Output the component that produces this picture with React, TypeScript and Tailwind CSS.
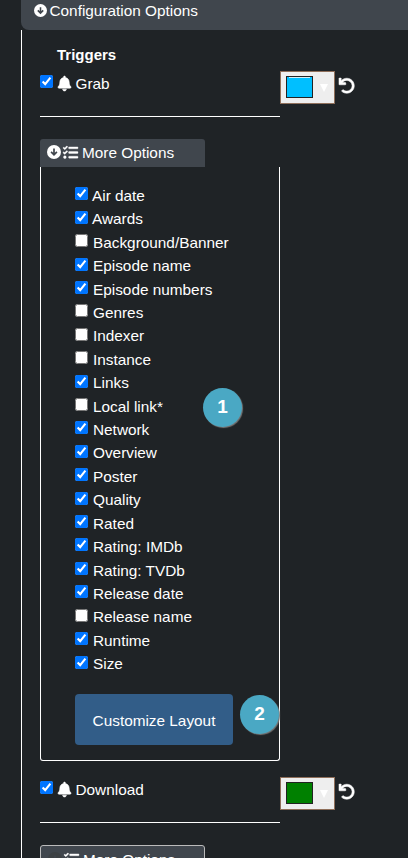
import { FaBell, FaTasks, FaUndo } from "react-icons/fa";

type Option = { label: string; on: boolean };

const options: Option[] = [
  { label: "Air date", on: true },
  { label: "Awards", on: true },
  { label: "Background/Banner", on: false },
  { label: "Episode name", on: true },
  { label: "Episode numbers", on: true },
  { label: "Genres", on: false },
  { label: "Indexer", on: false },
  { label: "Instance", on: false },
  { label: "Links", on: true },
  { label: "Local link*", on: false },
  { label: "Network", on: true },
  { label: "Overview", on: true },
  { label: "Poster", on: true },
  { label: "Quality", on: true },
  { label: "Rated", on: true },
  { label: "Rating: IMDb", on: true },
  { label: "Rating: TVDb", on: true },
  { label: "Release date", on: true },
  { label: "Release name", on: false },
  { label: "Runtime", on: true },
  { label: "Size", on: true },
];

function Check({ on }: { on: boolean }) {
  return <input type="checkbox" defaultChecked={on} className="m-0 block size-[13px] shrink-0" />;
}

function DownDisc({ className }: { className: string }) {
  return (
    <svg viewBox="0 0 14 14" className={"shrink-0 " + className}>
      <circle cx="7" cy="7" r="7" fill="currentColor" />
      <path d="M7 3.4v6M4.1 6.9 7 9.8l2.9-2.9" fill="none" stroke="#40464d" strokeWidth="1.7" />
    </svg>
  );
}

function ColorPicker({ color, glint }: { color: string; glint?: boolean }) {
  return (
    <div className="flex items-start">
      <div className="flex h-[33px] w-[55px] items-start border border-[#8f6f5a] bg-[#eeeeee] pt-1 pl-[5px]">
        <div className="h-[22px] w-[27px] border border-[#222222]" style={{ backgroundColor: color }}>
          {glint && <div className="mx-[2px] h-px bg-[#d5eef5]" />}
        </div>
        <svg viewBox="0 0 8 8" className="mt-2 ml-[7px] size-2 fill-white">
          <path d="M0 0h8L4 8z" />
        </svg>
      </div>
      <FaUndo className="mt-[7px] ml-1 size-[15.5px] overflow-visible stroke-white stroke-[18px]" />
    </div>
  );
}

function Trigger({ label, color, glint }: { label: string; color: string; glint?: boolean }) {
  return (
    <div className="flex h-[46px] items-start">
      <div className="flex h-[46px] w-60 items-start border-b border-white">
        <div className="mt-[4px]">
          <Check on />
        </div>
        <FaBell className="mt-[5px] ml-[4px] h-[15px] w-[15px] overflow-visible stroke-white stroke-[18px]" />
        <span className="mt-[4px] ml-[3.5px] leading-[17px]">{label}</span>
      </div>
      <ColorPicker color={color} glint={glint} />
    </div>
  );
}

function Badge({ n }: { n: number }) {
  return (
    <div className="flex size-[39px] items-center justify-center rounded-full bg-[#4aa8c4] text-[19px] font-bold shadow-[1px_1px_1px_#777777]">
      {n}
    </div>
  );
}

export default function App() {
  return (
    <div className="relative h-[858px] w-[408px] overflow-hidden bg-[#1f2326] pl-[21px] font-['Liberation_Sans',Arial,sans-serif] text-[15.35px] text-white">
      <header className="flex h-[30px] items-start rounded-bl-lg bg-[#40464d] pl-[13px]">
        <DownDisc className="mt-[4px] size-[13px]" />
        <span className="mt-[2px] ml-[2.5px] leading-[17px]">Configuration Options</span>
      </header>

      <main className="h-[828px] border-l border-white pl-[18px]">
        <h2 className="ml-[17px] pt-[16px] text-[15px] leading-[17px] font-bold">Triggers</h2>
        <div className="mt-[8px]">
          <Trigger label="Grab" color="#00bfff" glint />
        </div>

        <div className="mt-[22px] flex h-7 w-[165px] items-start rounded-t-[3px] bg-[#40464d] pt-[5px] pl-[7px]">
          <DownDisc className="mt-[1px] size-[14px]" />
          <FaTasks className="mt-[1px] ml-[2px] size-[15px] overflow-visible stroke-white stroke-[12px]" />
          <span className="ml-1 leading-[17px]">More Options</span>
        </div>

        <section className="h-[594px] w-60 rounded-b-[3px] border border-t-0 border-white pt-[20.4px] pl-[34px]">
          {options.map((o) => (
            <label key={o.label} className="flex h-[23.41px] items-start">
              <Check on={o.on} />
              <span className={"-mt-[0.4px] leading-[17px] " + (o.label.startsWith("A") ? "ml-1" : "ml-[5px]")}>{o.label}</span>
            </label>
          ))}
          <button className="mt-[15px] block h-[51px] w-[158px] rounded bg-[#325d88] pt-[2px]">Customize Layout</button>
        </section>

        <div className="mt-[16px]">
          <Trigger label="Download" color="#008000" />
        </div>

        <div className="mt-[22px] flex h-7 w-[165px] items-start rounded-[3px] border border-[#bbbbbb] bg-[#40464d] pt-[5px] pl-[7px]">
          <DownDisc className="mt-px size-[14px] text-[#3d4144]" />
          <FaTasks className="mt-px ml-[2px] size-[15px] overflow-visible stroke-white stroke-[12px]" />
          <span className="ml-1 leading-[17px]">More Options</span>
        </div>
      </main>

      <div className="absolute top-[388px] left-[203px]">
        <Badge n={1} />
      </div>
      <div className="absolute top-[695px] left-[240px]">
        <Badge n={2} />
      </div>
    </div>
  );
}
